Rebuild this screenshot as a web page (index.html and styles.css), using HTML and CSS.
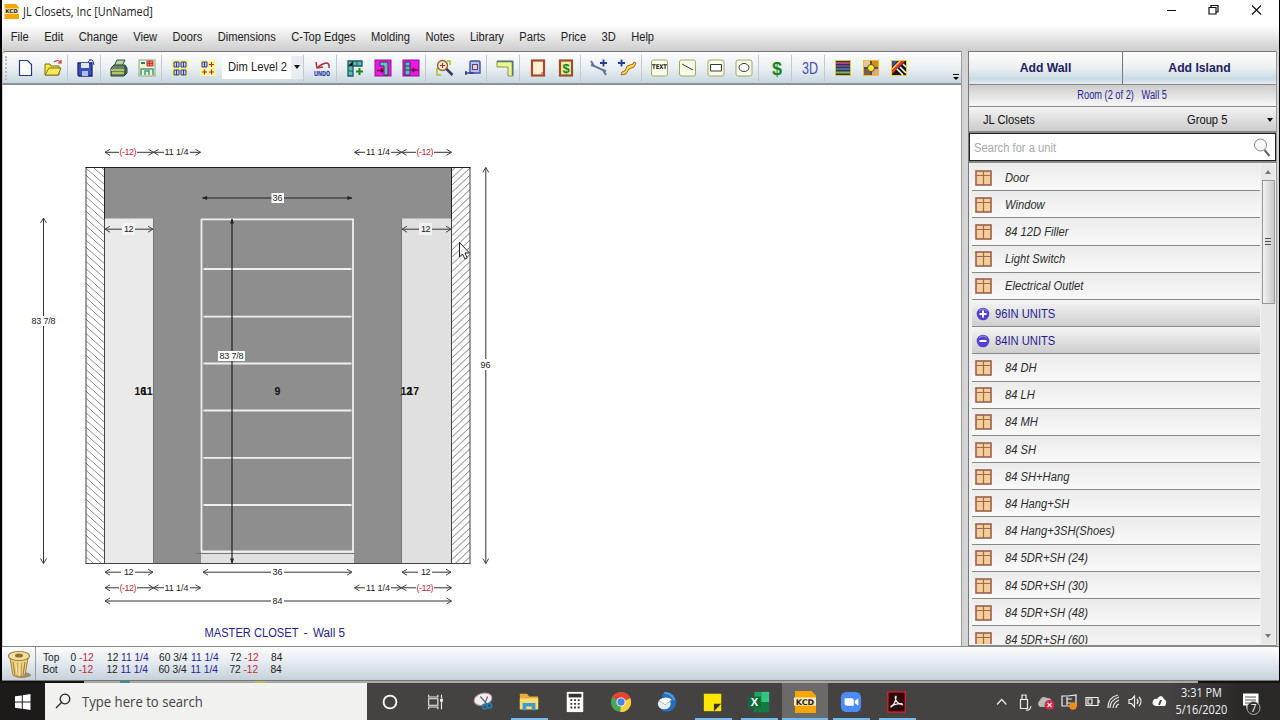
FILE: index.html
```html
<!DOCTYPE html>
<html lang="en">
<head>
<meta charset="utf-8">
<title>JL Closets, Inc [UnNamed]</title>
<link rel="stylesheet" href="styles.css">
</head>
<body>
<svg class="defs" width="0" height="0">
  <symbol id="box" viewBox="0 0 17 16"><rect x="1" y="1" width="15" height="14" fill="#f3cf98" stroke="#9a5f50" stroke-width="1.6"/><path d="M8.5 1v14M1 5.500h15" stroke="#a4674f" stroke-width="1.2"/></symbol>
  <symbol id="kcd" viewBox="0 0 24 24"><path d="M1 0h18l5 5v19H1z" fill="#f7a600"/><rect y="7" width="24" height="9" fill="#fbe9b8"/><text x="12" y="15" font-family="DejaVu Sans" font-weight="bold" font-size="8.500" text-anchor="middle" textLength="20" lengthAdjust="spacingAndGlyphs" fill="#222">KCD</text></symbol>
</svg>
<div class="window">
  <header class="titlebar">
    <svg class="app-icon" width="15" height="15"><use href="#kcd"/></svg>
    <span class="title">JL Closets, Inc [UnNamed]</span>
    <svg class="winctl" width="100" height="20" fill="none" stroke="#111"><path d="M3 11.500h9"/><path d="M45 8.500h7v6.500h-7zM47 8.500v-2h7v6.500h-2" stroke-width="1.200"/><path d="M88 6.500l9 9M97 6.500l-9 9" stroke-width="1.200"/></svg>
  </header>
  <nav class="menubar"><span>File</span><span>Edit</span><span>Change</span><span>View</span><span>Doors</span><span>Dimensions</span><span>C-Top Edges</span><span>Molding</span><span>Notes</span><span>Library</span><span>Parts</span><span>Price</span><span>3D</span><span>Help</span></nav>
  <div class="main">
    <section class="work">
      <div class="toolbar">
        <span class="grip"></span>
        <svg viewBox="0 0 28 20"><path d="M8.500 2.500h8l4 4v11h-12z" fill="#fff" stroke="#223a8c" stroke-width="1.200"/></svg>
        <svg viewBox="0 0 28 20"><path d="M6 17V6h5l1 2h8v9z" fill="#f6ea3a" stroke="#77731d"/><path d="M6 17l4-7h12l-3 7z" fill="#ffe95b" stroke="#77731d"/><path d="M15 4q4-3 6 0m1-2v3h-3" fill="none" stroke="#c22" stroke-width="1.200"/></svg>
        <i></i>
        <svg viewBox="0 0 28 20"><path d="M6 5h14v13H7l-1-1z" fill="#3b50b4" stroke="#1c2574" stroke-width="1.300"/><path d="M9 5h8v5H9z" fill="#dce8ef"/><path d="M10 13h6v5h-6z" fill="#aebde0"/><path d="M16 4q3-4 5-1l1 4m-4-4V1" fill="none" stroke="#28349a"/></svg>
        <i></i>
        <svg viewBox="0 0 28 20"><path d="M9 8l3-6h8l-3 6" fill="#b9d3a6" stroke="#314d40"/><path d="M6 10l3-3h11l2 3v5l-3 3H6z" fill="#65836c" stroke="#203c35"/><path d="M6 12h14M7 15h12" stroke="#d3d65b" stroke-width="1.500"/><path d="M20 8v9" stroke="#153033"/></svg>
        <svg viewBox="0 0 28 20"><rect x="6" y="2" width="16" height="16" fill="#edf7cf" stroke="#8eaa71"/><path d="M8 4h4v2H8z" fill="#317a84"/><path d="M14 3h6v5h-6zM16.500 3v5M14 5.500h6" fill="#f78" stroke="#c32"/><path d="M8 17v-6h12v6M12 17v-4h4v4" fill="none" stroke="#48948b" stroke-width="1.500"/></svg>
        <i></i>
        <svg viewBox="0 0 28 20"><rect x="6" y="2" width="16" height="16" fill="#f8f57a"/><path d="M8 4h5v5H8zM15 4h5v5h-5zM8 12h5v5H8zM15 12h5v5h-5zM10.500 4v5M17.500 4v5M10.500 12v5M17.500 12v5" fill="#c5cdf7" stroke="#303c95"/></svg>
        <svg viewBox="0 0 28 20"><rect x="6" y="2" width="16" height="16" fill="#faf9a2"/><path d="M8 4h5v5H8zM10.500 4v5" fill="#c5cdf7" stroke="#303c95"/><path d="M15 6.500h5M17.500 4v5M8 14h5M10.500 11.500v5M15 14h5M17.500 11.500v5" stroke="#c3262e" stroke-width="1.200"/></svg>
        <div class="dim"><span class="c">Dim Level 2</span><b></b></div>
        <i></i>
        <svg viewBox="0 0 28 20"><path d="M21 10q1-8-8-3l-3 2m-2-5l1 6 6-1" fill="none" stroke="#b42a38" stroke-width="1.500"/><text x="6" y="18" textLength="16" lengthAdjust="spacingAndGlyphs" class="undo">UNDO</text></svg>
        <i></i>
        <svg viewBox="0 0 28 20"><path d="M7 3h14v5h-9v10H7z" fill="#63b9ae" stroke="#195a63" stroke-width="1.300"/><path d="M7 8h5v-5m4 0v5M7 13h5" stroke="#195a63"/><path d="M15 13.500h7M18.500 10v7" stroke="#18851f" stroke-width="2"/></svg>
        <svg viewBox="0 0 28 20"><rect x="6" y="2" width="16" height="16" fill="#ee18e5" stroke="#911295"/><path d="M11 4h8v13h-4V8h-4z" fill="#70b9c4" stroke="#31364a"/><path d="M8 12.500h6m-2-2l2 2-2 2" fill="none" stroke="#5c0530" stroke-width="1.300"/></svg>
        <svg viewBox="0 0 28 20"><rect x="6" y="2" width="16" height="16" fill="#f015e4" stroke="#911295"/><path d="M8 4h5v13H8zM8 8h5M8 12h5" fill="#68b9bd" stroke="#293965"/><path d="M21 12h-6m2-2l-2 2 2 2" fill="none" stroke="#5c0530" stroke-width="1.300"/></svg>
        <i></i>
        <svg viewBox="0 0 28 20"><path d="M7 10v7h4M17 3h3v4" fill="none" stroke="#a8c424" stroke-width="1.600"/><circle cx="12.500" cy="7.500" r="5" fill="#fae6bb" stroke="#8b603d" stroke-width="1.300"/><path d="M10 7.500h5M12.500 5v5" stroke="#b32932"/><path d="M16.500 11l6 6" stroke="#363b58" stroke-width="2.500"/></svg>
        <svg viewBox="0 0 28 20"><path d="M12 15V4l1-1h8l1 1v11z" fill="#b5c1ec" stroke="#3f4ca1" stroke-width="1.400"/><rect x="14.500" y="6.500" width="5" height="5" fill="#f6cbc0" stroke="#4c4584"/><path d="M7 15h9M8 13v4" stroke="#354087" stroke-width="1.500"/></svg>
        <i></i>
        <svg viewBox="0 0 28 20"><path d="M6 3h16v15h-5V9H6z" fill="#edf68d" stroke="#889344"/><path d="M6 3.500h15.500v14" fill="none" stroke="#527782" stroke-width="1.500"/></svg>
        <i></i>
        <svg viewBox="0 0 28 20"><rect x="8" y="2.500" width="12" height="15" fill="#fff2d2" stroke="#a34a2d" stroke-width="2.200"/><path d="M17 15h4" stroke="#d32"/></svg>
        <svg viewBox="0 0 28 20"><rect x="8" y="2.500" width="12" height="15" fill="#ecf2a2" stroke="#a34a2d" stroke-width="2.200"/><text x="14" y="14.500" class="money small">$</text></svg>
        <i></i>
        <svg viewBox="0 0 28 20"><path d="M6 3l3 5 9 4 3 5M6 7l3 1M18 12l3 1" fill="none" stroke="#65769b" stroke-width="2"/><path d="M15 5h7M18.500 1.500v7" stroke="#233a9e" stroke-width="1.800"/></svg>
        <svg viewBox="0 0 28 20"><path d="M8 17l1-3 3-1 2-5 6-2 1-2 2 1-2 4-5 2-3 5z" fill="#ffda46" stroke="#a46b2a"/><path d="M5 5h7M8.500 1.500v7" stroke="#233a9e" stroke-width="1.800"/></svg>
        <i></i>
        <svg viewBox="0 0 28 20"><rect x="5.500" y="2" width="16" height="16" rx="2" class="draw"/><text x="6" y="11" textLength="15" lengthAdjust="spacingAndGlyphs" class="txt">TEXT</text></svg>
        <svg viewBox="0 0 28 20"><rect x="5.500" y="2" width="16" height="16" rx="2" class="draw"/><path d="M8 6l11 6" stroke="#363c46"/></svg>
        <svg viewBox="0 0 28 20"><rect x="6" y="2" width="16" height="16" rx="2" class="draw"/><path d="M8.500 6.500h11v6.500h-11z" fill="#fff" stroke="#363c46"/></svg>
        <svg viewBox="0 0 28 20"><rect x="6" y="2" width="16" height="16" rx="2" class="draw"/><ellipse cx="14" cy="9.500" rx="5" ry="4" fill="#fff" stroke="#363c46"/></svg>
        <i></i>
        <svg viewBox="0 0 28 20"><text x="14" y="16.500" class="money">$</text></svg>
        <i></i>
        <svg viewBox="0 0 28 20"><text x="6" y="15.500" textLength="16" lengthAdjust="spacingAndGlyphs" class="three">3D</text></svg>
        <i></i>
        <svg viewBox="0 0 28 20"><rect x="6.500" y="2.500" width="15" height="15" fill="#37304a" stroke="#d8c934"/><path d="M7 5h14" stroke="#a54b72" stroke-width="2"/><path d="M7 8h14" stroke="#75569e" stroke-width="1.500"/><path d="M7 11h14" stroke="#4c7fc4" stroke-width="1.500"/><path d="M7 14.500h14" stroke="#7fb65e" stroke-width="2"/></svg>
        <svg viewBox="0 0 28 20"><rect x="6.500" y="2.500" width="15" height="15" fill="#795f52" stroke="#e3c323"/><path d="M7 3h6v6H7z" fill="#e8c3a8"/><path d="M15 3h6v6h-6z" fill="#d88a1d"/><path d="M15 11h6v6h-6z" fill="#e0a48c"/><path d="M7 10h4M17 10h4M14 3v4M14 13v4" stroke="#413b35"/><circle cx="14" cy="10" r="3.500" fill="#f7ed35" stroke="#555322"/></svg>
        <svg viewBox="0 0 28 20"><rect x="6.500" y="2.500" width="15" height="15" fill="#171719" stroke="#edcf20"/><path d="M7 9l6-6H7z" fill="#344abd"/><path d="M7 16L20 3h-5L7 11z" fill="#e6372c"/><path d="M7 11l8-8" stroke="#ffe26b" stroke-width="1.300"/><path d="M12 11l6 6M15 9l6 6M18 6l3 3" stroke="#fff" stroke-width="1.600"/></svg>
        <svg class="more" viewBox="0 0 8 8"><path d="M1 .5h6" stroke="#111"/><path d="M1 3h6L4 6z"/></svg>
      </div>
      <div class="canvas">
        <svg class="plan" width="959" height="561" viewBox="3 85 959 561">
          <defs>
            <pattern id="hl" width="19" height="7.200" patternUnits="userSpaceOnUse" x="86" y="168"><path d="M0-14.400l19 17M0-7.200l19 17M0 0l19 17M0 7.200l19 17" stroke="#777" stroke-width=".9"/></pattern>
            <pattern id="hr" width="18" height="7.200" patternUnits="userSpaceOnUse" x="452" y="168"><path d="M0 2.600l18-17M0 9.800l18-17M0 17l18-17M0 24.200l18-17" stroke="#666" stroke-width=".9"/></pattern>
            <marker id="a" viewBox="0 0 6 8" refX="5.500" refY="4" markerWidth="6" markerHeight="8" markerUnits="userSpaceOnUse" orient="auto-start-reverse"><path d="M.5 1L5.500 4 .5 7" fill="none" stroke="#444"/></marker>
            <marker id="f" viewBox="0 0 6 6" refX="5.500" refY="3" markerWidth="6" markerHeight="5" markerUnits="userSpaceOnUse" orient="auto-start-reverse"><path d="M0 .5L6 3 0 5.500z" fill="#222"/></marker>
          </defs>
          <rect x="104.500" y="167.500" width="347" height="396" fill="#8e8e8e"/>
          <rect x="86" y="167.500" width="18.500" height="396" fill="#fff"/><rect x="86" y="167.500" width="18.500" height="396" fill="url(#hl)" stroke="#444"/>
          <rect x="451.500" y="167.500" width="18.500" height="396" fill="#fff"/><rect x="451.500" y="167.500" width="18.500" height="396" fill="url(#hr)" stroke="#444"/>
          <path d="M85.500 167.500h385M104.500 167v52M451.500 167v52" stroke="#222"/><path d="M85.500 563.500h385" stroke="#444"/>
          <rect x="105" y="218.500" width="48" height="344.500" fill="#eaeaea"/><path d="M153.500 218.500v345" stroke="#777"/>
          <rect x="402" y="218.500" width="49" height="344.500" fill="#e0e0e0"/><path d="M401.500 218.500v345" stroke="#777"/>
          <rect x="201" y="552" width="153" height="11" fill="#e0e0e0"/>
          <path d="M196 553.500h158" stroke="#777"/>
          <path d="M201.500 219v332.500M353 219v332.500M201 219.300h153M201 551.500h153M203.500 269h148M203.500 316.700h148M203.500 363.500h148M203.500 410.500h148M203.500 457.800h148M203.500 505h148" stroke="#eee" stroke-width="1.800"/>
          <g stroke="#333" fill="none">
            <path class="ar" d="M105 152.300H153.500"/><path class="ar" d="M153.500 152.300H200.500"/><path class="ar" d="M354.500 152.300H401.500"/><path class="ar" d="M401.500 152.300H451.500"/>
            <path class="ar" d="M105 229.200H153"/><path class="ar" d="M402 229.200H451"/>
            <path class="ar" d="M105 572.200H153"/><path class="ar" d="M203 572.200H352"/><path class="ar" d="M402 572.200H451"/>
            <path class="ar" d="M105 587.800H153.500"/><path class="ar" d="M153.500 587.800H200.500"/><path class="ar" d="M354.500 587.800H401.500"/><path class="ar" d="M401.500 587.800H451.500"/>
            <path class="ar" d="M105 601H451.500"/><path class="ar" d="M43.500 218V563.500"/><path class="ar" d="M485.800 167.500V563.500"/>
          </g>
          <path class="fl" d="M202.500 198H352"/><path class="fl" d="M232 219V563"/>
          <g fill="#fff"><path d="M119 147h18v10h-18zM164 147h26v10h-26zM365 147h26v10h-26zM416 147h18v10h-18zM119 583h18v10h-18zM164 583h26v10h-26zM365 583h26v10h-26zM416 583h18v10h-18zM121 567h14v10h-14zM418 567h14v10h-14zM271 567h13v10h-13zM271 596h13v10h-13zM30 316h27v10H30zM479 359h13v11h-13zM271.500 193h12.500v10h-12.500zM218 351h27v10h-27z"/></g>
          <path d="M122 223h13v12h-13z" fill="#f5f5f5"/><path d="M419 223h13v12h-13z" fill="#f2f2f2"/>
          <g class="dt">
            <text class="r" x="119.500" y="155" textLength="17">(-12)</text><text x="164.500" y="155" textLength="24">11 1/4</text><text x="366" y="155" textLength="24">11 1/4</text><text class="r" x="416.500" y="155" textLength="17">(-12)</text>
            <text x="124" y="232" textLength="9.500">12</text><text x="421" y="232" textLength="9.500">12</text>
            <text x="272.500" y="201" textLength="10">36</text><text x="219.500" y="359" textLength="24">83 7/8</text><text x="31.500" y="324" textLength="24">83 7/8</text><text x="480.500" y="368" textLength="10">96</text>
            <text x="124" y="575" textLength="9.500">12</text><text x="272.500" y="575" textLength="10">36</text><text x="421" y="575" textLength="9.500">12</text>
            <text class="r" x="119.500" y="590.500" textLength="17">(-12)</text><text x="164.500" y="590.500" textLength="24">11 1/4</text><text x="366" y="590.500" textLength="24">11 1/4</text><text class="r" x="416.500" y="590.500" textLength="17">(-12)</text>
            <text x="272.500" y="603.500" textLength="10">84</text>
          </g>
          <g class="un"><text x="134.500" y="394.500">16</text><text x="141.500" y="394.500">11</text><text x="274.500" y="394.500">9</text><text x="400.500" y="394.500">12</text><text x="407.500" y="394.500">17</text></g>
          <text class="cap" x="204.500" y="636.500" textLength="94" lengthAdjust="spacingAndGlyphs">MASTER CLOSET</text><text class="cap" x="303.500" y="636.500">-</text><text class="cap" x="313" y="636.500" textLength="32" lengthAdjust="spacingAndGlyphs">Wall 5</text>
          <path d="M459.500 242.500v14.500l3-3 2.500 5 2.300-1-2.300-5h4.500z" fill="#fff" stroke="#222"/>
        </svg>
      </div>
    </section>
    <aside class="side">
      <div class="adds"><button>Add Wall</button><button>Add Island</button></div>
      <div class="room"><span>Room (2 of 2) &nbsp; Wall 5</span></div>
      <div class="group"><span class="c">JL Closets</span><span class="c g5">Group 5</span><b></b></div>
      <div class="search"><span class="c">Search for a unit</span><svg width="18" height="20" viewBox="0 0 18 20" fill="none"><circle cx="7.500" cy="7" r="6" fill="#fafafa" stroke="#888"/><path d="M11.500 12l5 6" stroke="#666" stroke-width="2"/></svg></div>
      <div class="list">
        <div class="rows">
          <div class="row"><svg><use href="#box"/></svg><em class="c">Door</em></div>
          <div class="row"><svg><use href="#box"/></svg><em class="c">Window</em></div>
          <div class="row"><svg><use href="#box"/></svg><em class="c">84 12D Filler</em></div>
          <div class="row"><svg><use href="#box"/></svg><em class="c">Light Switch</em></div>
          <div class="row"><svg><use href="#box"/></svg><em class="c">Electrical Outlet</em></div>
          <div class="row head"><svg viewBox="0 0 14 14"><circle cx="7" cy="7" r="6.300" fill="#5442cf"/><path d="M3 4q4-4 8 0" stroke="#9d91ef" fill="none"/><path d="M3.500 7h7M7 3.500v7" stroke="#fff" stroke-width="2"/></svg><span class="c">96IN UNITS</span></div>
          <div class="row head"><svg viewBox="0 0 14 14"><circle cx="7" cy="7" r="6.300" fill="#5442cf"/><path d="M3 4q4-4 8 0" stroke="#9d91ef" fill="none"/><path d="M3.500 7h7" stroke="#fff" stroke-width="2"/></svg><span class="c">84IN UNITS</span></div>
          <div class="row"><svg><use href="#box"/></svg><em class="c">84 DH</em></div>
          <div class="row"><svg><use href="#box"/></svg><em class="c">84 LH</em></div>
          <div class="row"><svg><use href="#box"/></svg><em class="c">84 MH</em></div>
          <div class="row"><svg><use href="#box"/></svg><em class="c">84 SH</em></div>
          <div class="row"><svg><use href="#box"/></svg><em class="c">84 SH+Hang</em></div>
          <div class="row"><svg><use href="#box"/></svg><em class="c">84 Hang+SH</em></div>
          <div class="row"><svg><use href="#box"/></svg><em class="c">84 Hang+3SH(Shoes)</em></div>
          <div class="row"><svg><use href="#box"/></svg><em class="c">84 5DR+SH (24)</em></div>
          <div class="row"><svg><use href="#box"/></svg><em class="c">84 5DR+SH (30)</em></div>
          <div class="row"><svg><use href="#box"/></svg><em class="c">84 5DR+SH (48)</em></div>
          <div class="row"><svg><use href="#box"/></svg><em class="c">84 5DR+SH (60)</em></div>
        </div>
        <div class="scroll"><span class="up"></span><div class="thumb"><u></u></div><span class="down"></span></div>
      </div>
    </aside>
  </div>
  <footer class="status">
    <div class="trash"><svg width="28" height="30" viewBox="0 0 28 30"><ellipse cx="17" cy="26" rx="9" ry="3" fill="#9a8d78"/><path d="M5 9l3 17q6 4 12 0l3-17z" fill="#ecd07e" stroke="#a87f3c"/><path d="M8 13l2 13M12 14v13M16 14v13M20 13l-2 13" stroke="#9d7a3a"/><path d="M11 14l1 12M15 14v12" stroke="#fff0b0"/><ellipse cx="14" cy="7" rx="10.500" ry="4.500" fill="#f5e0a0" stroke="#a5803f" stroke-width="1.200"/><ellipse cx="14" cy="6.500" rx="4" ry="2" fill="#8f7038"/></svg></div>
    <div class="dims"><p><span>Top</span><span>0</span><span class="r">-12</span><span>12</span><span class="b">11 1/4</span><span>60 3/4</span><span class="b">11 1/4</span><span>72</span><span class="r">-12</span><span>84</span></p><p><span>Bot</span><span>0</span><span class="r">-12</span><span>12</span><span class="b">11 1/4</span><span>60 3/4</span><span class="b">11 1/4</span><span>72</span><span class="r">-12</span><span>84</span></p></div>
  </footer>
</div>
<div class="strip"></div>
<footer class="taskbar">
  <div class="start"><svg width="16" height="16" fill="#fff"><path d="M0 2.300L6.800 1.400V7.500H0zM7.800 1.200L15.500 0V7.500H7.800zM0 8.500h6.800v6.200L0 13.800zM7.800 8.500h7.700V16l-7.700-1.200z"/></svg></div>
  <div class="find"><svg width="17" height="17" fill="none" stroke="#222" stroke-width="1.300"><circle cx="10" cy="6" r="4.800"/><path d="M6.500 9.500L1 15"/></svg><span>Type here to search</span></div>
  <div class="task ring"><svg viewBox="0 0 24 24"><circle cx="12" cy="12" r="7" fill="none" stroke="#fff" stroke-width="2"/></svg></div>
  <div class="task view"><svg viewBox="0 0 24 24" fill="none" stroke="#eee" stroke-width="1.200"><path d="M4 8.500h10v7H4zM4 4v2.500h10V4M4 20v-2.500h10V20M18 4v4M18 12v8"/><path d="M17 9h2v2h-2z" fill="#fff"/></svg></div>
  <div class="task"><svg viewBox="0 0 24 24"><ellipse cx="12" cy="9" rx="10" ry="6.500" fill="#eee" stroke="#c98a98" transform="rotate(-15 12 9)"/><path d="M9 6l8 9M17 6l-3 8" stroke="#666" stroke-width="1.300"/><circle cx="14" cy="17" r="2.500" fill="none" stroke="#227db1" stroke-width="2"/><circle cx="19" cy="16" r="2.500" fill="none" stroke="#227db1" stroke-width="2"/></svg></div>
  <div class="task run"><svg viewBox="0 0 24 24"><path d="M2 3h8l2 3h10v14H2z" fill="#e9ae36"/><path d="M2 8h20v12H2z" fill="#ffdc72"/><path d="M5 21v-8h14v8h-4v-4H9v4z" fill="#3b9bd5"/></svg></div>
  <div class="task"><svg viewBox="0 0 24 24"><path d="M3 1h18v22H3z" fill="#fff"/><path d="M5 3h14v4H5z" fill="#333"/><path d="M7 10h2M11 10h2M15 10h2M7 14h2M11 14h2M15 14h2M7 18h2M11 18h2M15 18h2" stroke="#333" stroke-width="2"/></svg></div>
  <div class="task"><svg viewBox="0 0 24 24"><circle cx="12" cy="12" r="11" fill="#4aa657"/><path d="M12 12L2.500 6.500A11 11 0 0 1 22.300 8z" fill="#e34436"/><path d="M12 12l10.300-4a11 11 0 0 1-11 15z" fill="#f9cf3c"/><circle cx="12" cy="12" r="5" fill="#fff"/><circle cx="12" cy="12" r="4" fill="#4686e8"/></svg></div>
  <div class="task"><svg viewBox="0 0 24 24"><path d="M8 2q10-3 14 7 1 10-7 13-9 2-12-6l4-7q-1-5 1-7z" fill="#286db7"/><ellipse cx="9" cy="14" rx="7" ry="6" fill="#e8edf0"/><path d="M3 10l7 5 7-6Q10 5 3 10z" fill="#fff"/><path d="M3 10l7 5 7-5" stroke="#9fb3c8" fill="none"/><path d="M9 2q8 0 11 8" stroke="#49a9e4" stroke-width="2" fill="none"/></svg></div>
  <div class="task run"><svg viewBox="0 0 24 24"><path d="M2 3h19v19H2z" fill="#ffe600"/><path d="M13 22v-8h8z" fill="#333"/></svg></div>
  <div class="task run"><svg viewBox="0 0 24 24"><path d="M7 1h16v22H7z" fill="#21a366"/><path d="M15 1h8v11h-8z" fill="#36c481"/><path d="M7 12h16v11H7z" fill="#107c41"/><path d="M0 6h14v13H0z" fill="#126b3b"/><text x="7" y="16.500" class="xl">X</text></svg></div>
  <div class="task run active"><svg><use href="#kcd"/></svg></div>
  <div class="task run"><svg viewBox="0 0 24 24"><rect x="1" y="1" width="22" height="22" rx="6" fill="#4a8cff"/><path d="M5 8h8q2 0 2 2v6H7q-2 0-2-2zM16 11l4-3v8l-4-3z" fill="#fff"/></svg></div>
  <div class="task run"><svg viewBox="0 0 24 24"><rect x="2" y="1" width="19" height="22" fill="#2b0909" stroke="#d3222b" stroke-width="1.500"/><path d="M5 17q5-2 6-10 0-3-1 0 1 7 8 8 0-2-5-1-6 1-8 4" fill="none" stroke="#eee" stroke-width="1.300"/></svg></div>
  <svg class="tray" width="180" height="37" viewBox="992 683 180 37" fill="none" stroke="#eee" stroke-width="1.200">
    <path d="M997 704.500l4.700-5 4.700 5"/><path d="M1020.500 699.500h7v9h-7zM1022 699v-4h4v4M1026 710q4 1 5-4"/>
    <path d="M1040 707q-4-3 0-7 2-5 7-2 5 0 5 5l-4 4z" fill="#bbb" stroke="none"/><circle cx="1049.500" cy="705" r="5" fill="#cf2944" stroke="none"/><path d="M1047.500 703l4 4m0-4l-4 4"/>
    <path d="M1062 696h6l8-1v11h-14zM1067 699h5M1067 703h4M1067 697v8"/><circle cx="1073" cy="706" r="3.700" fill="#f28c18" stroke="none"/>
    <path d="M1086 697.500h12v8h-12zM1099 700v3M1088 699h4v5h-4z"/>
    <path d="M1110 708q0-8 9-11M1113 708q0-5 6-8M1116 708q0-3 3-4M1108 708q0-11 10-13"/>
    <path d="M1129 699.500h2.500l3-3.500v11l-3-3.500h-2.500zM1137 699q2 2.500 0 5M1139 697q4 4.500 0 9"/>
    <path d="M1156 706q-5-1-3-5 1-3 4-2 4-6 7 0 4 2 1 7z" fill="#fff" stroke="none"/><path d="M1159 705l2-5" stroke="#444" stroke-width="2"/>
  </svg>
  <div class="clock"><span>3:31 PM</span><span>5/16/2020</span></div>
  <svg class="note" width="32" height="37" viewBox="1240 683 32 37"><path d="M1244 693.500h15.500v12h-9l-3 3.500v-3.500H1244z" fill="#fff"/><path d="M1246 697h11M1246 700h11M1246 703h6" stroke="#555"/><circle cx="1254.500" cy="708" r="6.500" fill="#2f2e2d" stroke="#aaa"/><text x="1254.500" y="712">7</text></svg>
</footer>
</body>
</html>
```
FILE: styles.css
```css
*{box-sizing:border-box}
body{margin:0;width:1280px;height:720px;overflow:hidden;background:#000;font:12px "Liberation Sans",Arial,sans-serif;color:#222}
.defs{position:absolute}
.c{display:inline-block;white-space:pre;transform:scaleX(.932);transform-origin:left}
.window{width:1277px;height:681px;margin-left:2px;display:flex;flex-direction:column;background:#fff}
.titlebar{height:25px;display:flex;align-items:flex-start;padding:4px 14px 0 2px}
.title{font:12px/16px "Open Sans",sans-serif;margin-left:4px;width:700px;white-space:nowrap;transform:scaleX(.905);transform-origin:left}
.app-icon{flex:none}
.winctl{margin:-5px 1px 0 auto;flex:none}
.menubar{height:26px;width:1376px;padding:0 0 2px 9.500px;display:flex;align-items:center;gap:16.600px;background:linear-gradient(#fff,#cdcdcd);transform:scaleX(.928);transform-origin:left;flex:none}
.main{display:flex;height:595px;background:#d3d3d3}
.work{width:960px;display:flex;flex-direction:column}
.toolbar{height:34px;flex:none;border:1px solid #999;border-top:1px solid #777;border-bottom:2px solid #8c9196;border-left-color:#bbb;border-radius:4px 0 0 0;background:linear-gradient(#fdfdfd,#eaf0f3 50%,#c9d7e0);display:flex;align-items:center;padding-left:1px}
.toolbar>svg{width:28px;height:20px;flex:none}
.grip{width:7px;height:24px;border-left:2px dotted #bbb;margin-left:1px;margin-right:-1px;flex:none}
.toolbar>i{width:5px;height:26px;border-left:1px solid #c3cacf;border-right:3px solid transparent;flex:none}
.dim{width:81px;height:23px;margin-top:-1px;background:#fff;display:flex;align-items:center;padding-left:6px;flex:none}
.dim b{margin-left:auto;width:12px;height:100%;background:#e7edf0;display:grid;place-items:center}
.dim b::after,.group b{content:"";border:3px solid transparent;border-top:4px solid #111;border-bottom:0}
.toolbar>.more{width:8px;height:8px;margin:20px 1px 0 auto}
.undo{font:bold 7px "DejaVu Sans Mono",monospace;fill:#26369a}
.draw{fill:#f9fce6;stroke:#9aa968}
.txt{font:bold 6.500px "DejaVu Sans",sans-serif;fill:#222}
.money{font:bold 18px "Liberation Sans",sans-serif;fill:#17851f;text-anchor:middle}
.small{font-size:13px}
.three{font:17px "Liberation Sans",sans-serif;fill:#4b4bb5}
.canvas{height:561px;background:#fff;margin-left:1px;border-right:1px solid #999}
.plan{display:block}
.ar{marker-start:url(#a);marker-end:url(#a)}
.fl{stroke:#222;stroke-width:1.200px;marker-start:url(#f);marker-end:url(#f)}
.dt{font-size:9px;fill:#222}
.dt .r{fill:#c5263a}
.un{font-size:10.500px;font-weight:bold;fill:#111}
.cap{font-size:12.500px;fill:#26228f}
.side{width:309px;margin-left:6px;display:flex;flex-direction:column;border-left:1px solid #777;border-right:1px solid #999;background:#aaa}
.adds{display:flex;height:33px;padding-top:1px;gap:1px;background:#777;flex:none}
.adds button{flex:1;border:0;padding:0;margin:0;background:linear-gradient(#fcfcfc,#edf1f3 48%,#c8dae4 85%,#e3edf1);font:bold 12.200px "Liberation Sans",sans-serif;color:#202163}
.room{height:23px;border:solid #888;border-width:1px 0;background:linear-gradient(#ccc,#f8f8f8);display:flex;justify-content:center;flex:none}
.room span{font-size:12px;line-height:21px;color:#2a2395;white-space:nowrap;transform:scaleX(.77)}
.group{height:26px;background:linear-gradient(#f4f4f4,#cbcbcb);border-bottom:2px solid #888;display:flex;align-items:center;padding:1px 3px 0 14px;color:#111;flex:none}
.g5{margin-left:148px}
.group b{margin-left:auto}
.search{height:28px;border:1px solid #222;background:#fff;color:#aaa;display:flex;align-items:center;padding:1px 4px 0;flex:none}
.search svg{margin-left:auto}
.list{height:485px;background:#f1f1f1;border:solid #888;border-width:2px 0 1px;display:flex;padding:1px 1px 1px 3px;overflow:hidden}
.rows{width:288px;height:480px;overflow:hidden;flex:none}
.row{height:27.200px;border-bottom:1px solid #888;background:linear-gradient(#ebebeb,#f9f9f9);display:flex;align-items:center;padding:1.200px 0 0 3px}
.row>svg{width:17px;height:16px;flex:none}
.row em{margin-left:13px;color:#2c2c2c}
.head{background:linear-gradient(#f5f5f5,#cecece);color:#241b91;padding-left:4px}
.row.head>svg{width:14px;height:14px}
.head span{margin-left:5px}
.scroll{width:14px;margin-left:1px;background:#e8e8e8;display:flex;flex-direction:column;align-items:center}
.up,.down{border:3px solid transparent;border-bottom:4px solid #777;border-top:0;margin:6px 0}
.down{transform:rotate(180deg);margin-top:auto}
.thumb{width:13px;height:124px;border:1px solid #999;background:linear-gradient(90deg,#f2f2f2,#c9c9c9);display:grid;place-items:center}
.thumb u{width:6px;height:8px;background:repeating-linear-gradient(#555 0 1px,#ddd 1px 3px)}
.status{height:35px;background:linear-gradient(#fcfcfc,#e5ecf1 45%,#c5d1da);border-top:1px solid #888;border-bottom:1px solid #777;display:flex}
.trash{width:34px;border-right:1px solid #999;display:grid;place-items:center}
.dims{padding:5px 0 0 7px;font-size:10.200px;line-height:12px}
.dims p{margin:0;display:grid;grid-template-columns:27.500px 8.500px 28px 14px 38px 32px 39px 14px 27px 20px;white-space:nowrap}
.dims p+p{margin-left:-.6px}
.dims .r{color:#cc2536}
.dims .b{color:#28219c}
.strip{height:2px;background:linear-gradient(90deg,#111 84px,#aaa 84px 120px,#3a8f9f 120px 130px,#aaa 130px 255px,#c4b65b 255px 265px,#aaa 265px 1198px,#111 1198px)}
.taskbar{height:37px;display:flex;background:linear-gradient(90deg,#444341 1170px,#2a2928 1240px)}
.start{width:45px;background:#1c1b19;display:grid;place-items:center}
.find{width:322px;background:#f1f1f0;display:flex;align-items:center;padding-left:10px;flex:none}
.find span{font:14.500px "Open Sans",sans-serif;margin-left:10px;color:#444;transform:scaleX(.905);transform-origin:left;white-space:nowrap}
.task{width:46px;height:37px;display:grid;place-items:center;flex:none}
.task svg{width:22px;height:22px;grid-area:1/1}
.ring{width:45px}
.view{width:48px}
.run::after{content:"";grid-area:1/1;align-self:end;width:37px;height:2px;background:#76b9ed}
.active{background:#6b6a69}
.active::after{width:46px}
.xl{font:bold 12px "Liberation Sans",sans-serif;fill:#fff;text-anchor:middle}
.tray{margin-left:72px;flex:none}
.clock{width:60px;display:flex;flex-direction:column;align-items:center;font:12px/17px "Open Sans",sans-serif;color:#f4f4f4;padding-top:1px;margin-left:-1px;flex:none}
.clock span{white-space:nowrap;transform:scaleX(.91)}
.note{margin-left:8px;flex:none}
.note text{font:10px "Open Sans",sans-serif;fill:#fff;text-anchor:middle}
```
